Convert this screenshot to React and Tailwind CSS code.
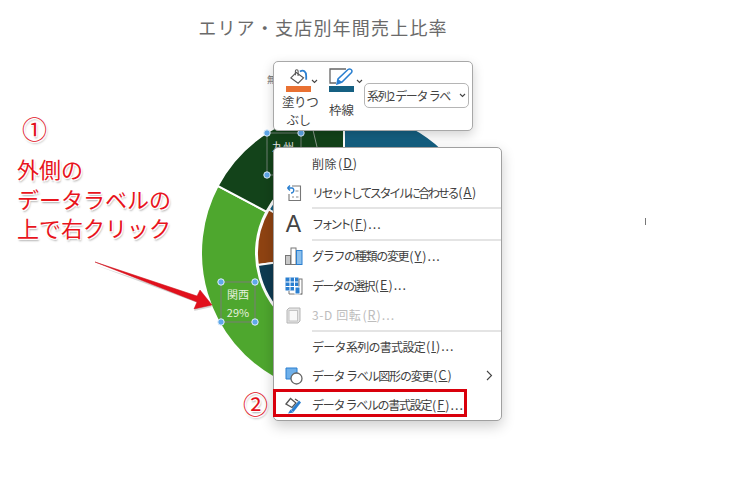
const font = { fontFamily: '"Noto Sans CJK JP", "Noto Sans", sans-serif' };

function polar(r, deg) {
  const a = (deg * Math.PI) / 180;
  return [344 + r * Math.sin(a), 253 - r * Math.cos(a)];
}

function slice(r0, r1, from, to) {
  const [x0, y0] = polar(r1, from);
  const [x1, y1] = polar(r1, to);
  const [x2, y2] = polar(r0, to);
  const [x3, y3] = polar(r0, from);
  const large = to - from > 180 ? 1 : 0;
  return `M${x0} ${y0}A${r1} ${r1} 0 ${large} 1 ${x1} ${y1}L${x2} ${y2}A${r0} ${r0} 0 ${large} 0 ${x3} ${y3}Z`;
}

function Handle({ x, y }) {
  return <circle cx={x} cy={y} r="3.2" fill="#5fa8ea" stroke="#e4f0fb" strokeWidth="1" />;
}

function Chart() {
  return (
    <svg className="absolute left-0 top-0" width="740" height="487" viewBox="0 0 740 487">
      <path d={slice(88, 143, 0, 120)} fill="#156082" stroke="#fff" strokeWidth="2" />
      <path d={slice(88, 143, 120, 298)} fill="#4ea72e" stroke="#fff" strokeWidth="2" />
      <path d={slice(88, 143, 298, 360)} fill="#13431a" stroke="#fff" strokeWidth="2" />
      <path d={slice(40, 87, 300, 360)} fill="#156082" stroke="#fff" strokeWidth="2" />
      <path d={slice(40, 87, 262, 300)} fill="#8f4312" stroke="#fff" strokeWidth="2" />
      <path d={slice(40, 87, 120, 262)} fill="#0e3b52" stroke="#fff" strokeWidth="2" />
      <path d="M313 130L317 147" stroke="#8a9a8c" strokeWidth="1" />

      <rect x="267" y="133" width="34" height="42" fill="none" stroke="#6f7f72" strokeWidth="1" />
      <Handle x={267} y={133} />
      <Handle x={301} y={133} />
      <Handle x={267} y={175} />

      <rect x="221" y="282" width="34" height="40" fill="none" stroke="#6c8a60" strokeWidth="1.5" />
      <Handle x={221} y={282} />
      <Handle x={255} y={282} />
      <Handle x={221} y={322} />
      <Handle x={255} y={322} />

      <path d="M95 263L197 297L201 291L212 305L194 309L197 303L198 301Z" fill="#b0b0b0" opacity="0.5" transform="translate(0 2)" />
      <path d="M95 262L197 296L200 290L212 305L194 309L197 302Z" fill="#e2101c" stroke="#c8101a" strokeWidth="0.5" />
    </svg>
  );
}

function FillIcon() {
  return (
    <svg width="20" height="17" viewBox="0 0 20 17">
      <path d="M1 10L7 4L15 10L9 16Z" fill="#fff" stroke="#555" strokeWidth="1.3" />
      <path d="M6 7V2.5C6 0.5 9 0.5 9 2.5V8" fill="none" stroke="#555" strokeWidth="1.2" />
      <path d="M11 3C15 0.5 18 3 18 8V12" fill="none" stroke="#2a7fd0" strokeWidth="2" />
    </svg>
  );
}

function LineIcon() {
  return (
    <svg width="25" height="17" viewBox="0 0 25 17">
      <path d="M7 15H1V1H17" fill="none" stroke="#666" strokeWidth="1.3" />
      <path d="M8 16L9 11L19 1.5C21 0 24 2 22.5 4.5L13 14Z" fill="#fff" stroke="#2a7fd0" strokeWidth="1.5" />
      <path d="M8 16L9 11L13 14Z" fill="#2a7fd0" />
    </svg>
  );
}

function Chevron() {
  return (
    <svg width="7" height="5" viewBox="0 0 7 5">
      <path d="M1 1L3.5 3.5L6 1" fill="none" stroke="#444" strokeWidth="1.1" />
    </svg>
  );
}

function Toolbar() {
  return (
    <div className="absolute left-[273px] top-[61px] flex h-[70px] w-[200px] rounded-[5px] border border-[#a8a8a8] bg-white text-[#444] shadow-[0_4px_12px_rgba(0,0,0,0.18)]">
      <div className="w-[44px] pl-[12px] pt-[6px]">
        <div className="flex h-[17px] items-end pl-[4px]">
          <FillIcon />
          <span className="mb-[1px] ml-[3px]">
            <Chevron />
          </span>
        </div>
        <div className="mt-[1px] h-[6px] w-[25px] bg-[#e97132]" />
        <div className="ml-[-4px] mt-[1px] w-[33px] whitespace-nowrap text-center text-[12.5px] leading-[18px] tracking-[-0.5px]">
          塗りつ
          <br />
          ぶし
        </div>
      </div>
      <div className="w-[46px] pl-[11px] pt-[6px]">
        <div className="flex h-[17px] items-end">
          <LineIcon />
          <span className="mb-[1px] ml-[2px]">
            <Chevron />
          </span>
        </div>
        <div className="mt-[1px] h-[6px] w-[25px] bg-[#156082]" />
        <div className="mt-[9px] w-[25px] text-center text-[12.5px] leading-[17px]">枠線</div>
      </div>
      <div className="mt-[21px] flex h-[25px] w-[105px] items-center justify-between rounded-[5px] border border-[#b5b5b5] pl-[2px] pr-[2px]">
        <span className="whitespace-nowrap text-[12px] tracking-[-1.3px]">系列2 データ ラベ</span>
        <Chevron />
      </div>
    </div>
  );
}

function ResetIcon() {
  return (
    <svg width="16" height="18" viewBox="0 0 16 18">
      <path d="M6 2H14.5V16.5H3V10" fill="#fff" stroke="#777" strokeWidth="1.1" />
      <path d="M9.5 7H12.5M6 13H8M10 13H12.5" stroke="#888" strokeWidth="1" />
      <path d="M1.5 4L4 1.5M1.5 4L4 6.5M1.5 4H6C8.5 4 8.5 9 5 9" fill="none" stroke="#2a7fd0" strokeWidth="1.4" />
    </svg>
  );
}

function ChartTypeIcon() {
  return (
    <svg width="18" height="18" viewBox="0 0 18 18">
      <rect x="0.5" y="8.5" width="5" height="9" fill="#c8c8c8" stroke="#777" />
      <rect x="6" y="1" width="5" height="16.5" fill="#fff" stroke="#777" />
      <rect x="11.5" y="3.5" width="5.5" height="14" fill="#8cc0ec" stroke="#2a7fd0" />
    </svg>
  );
}

function DataIcon() {
  return (
    <svg width="18" height="18" viewBox="0 0 18 18">
      <rect x="0.5" y="0.5" width="13" height="13" fill="#2a7fd0" />
      <path d="M0.5 5H13.5M0.5 9.5H13.5M5 0.5V13.5M9.5 0.5V13.5" stroke="#fff" strokeWidth="1" />
      <rect x="14" y="2" width="3" height="15" fill="#fff" stroke="#777" />
      <path d="M4 14V17H17" fill="none" stroke="#777" />
      <rect x="10" y="10" width="5" height="7" fill="#2a7fd0" stroke="#fff" />
    </svg>
  );
}

function RotateIcon() {
  return (
    <svg width="15" height="17" viewBox="0 0 15 17">
      <path d="M1 3L3 1H14V14L12 16H1Z" fill="#e4e4e4" stroke="#b5b5b5" />
      <rect x="3" y="3.5" width="8.5" height="10.5" fill="#f8f8f8" stroke="#c4c4c4" />
    </svg>
  );
}

function ShapeIcon() {
  return (
    <svg width="18" height="18" viewBox="0 0 18 18">
      <path d="M1 12V1H12V6A6 6 0 0 0 6 12Z" fill="#6fb0ea" stroke="#2a7fd0" />
      <circle cx="11.5" cy="11.5" r="5.5" fill="#fff" stroke="#666" strokeWidth="1.3" />
    </svg>
  );
}

function FormatIcon() {
  return (
    <svg width="17" height="17" viewBox="0 0 17 17">
      <path d="M1 7L5.5 1.5L11 6L7 10.5Z" fill="#fff" stroke="#555" strokeWidth="1.3" />
      <path d="M6 13L14 3.5L16 5.5L8.5 15Z" fill="#2a7fd0" />
      <path d="M3 16.5L5.5 12.5L8.5 15.5Z" fill="#2a7fd0" />
      <path d="M10 2L13 4" stroke="#555" strokeWidth="1.3" />
    </svg>
  );
}

function MenuRow({ icon, label, k, tail = ")", height, track, dim, arrow }) {
  return (
    <div className={`relative flex items-center ${height}`}>
      <div className="flex w-[38px] shrink-0 justify-center pl-[1px]">{icon}</div>
      <span className={`flex items-center whitespace-nowrap ${dim ? "text-[#bdbdbd]" : "text-[#3f3f3f]"}`}>
        <span className={`text-[12px] ${track}`}>{label}</span>
        <span className="ml-[1px] text-[12.5px] tracking-[1px]">
          (<span className="underline">{k}</span>
          {tail}
        </span>
      </span>
      {arrow ? (
        <svg className="absolute right-[8px] top-[9px]" width="7" height="11" viewBox="0 0 7 11">
          <path d="M1 1L5.5 5.5L1 10" fill="none" stroke="#444" strokeWidth="1.1" />
        </svg>
      ) : null}
    </div>
  );
}

function Sep() {
  return <div className="ml-[38px] h-[2px] bg-[#e4e4e4]" />;
}

function Menu() {
  return (
    <div className="absolute left-[273px] top-[147px] flex h-[274px] w-[229px] flex-col rounded-[5px] border border-[#a0a0a0] bg-white pt-[1px] shadow-[0_5px_14px_rgba(0,0,0,0.2)]">
      <MenuRow label="削除" k="D" height="h-[29px]" track="tracking-[0.5px]" />
      <MenuRow icon={<ResetIcon />} label="リセットしてスタイルに合わせる" k="A" height="h-[29px]" track="tracking-[-2.3px]" />
      <Sep />
      <MenuRow
        icon={<span className="text-[23px] leading-none text-[#444]" style={{ fontFamily: '"Liberation Sans"' }}>A</span>}
        label="フォント"
        k="F"
        tail=")..."
        height="h-[30px]"
        track="tracking-[-2.8px]"
      />
      <Sep />
      <MenuRow icon={<ChartTypeIcon />} label="グラフの種類の変更" k="Y" tail=")..." height="h-[30px]" track="tracking-[-1.3px]" />
      <MenuRow icon={<DataIcon />} label="データの選択" k="E" tail=")..." height="h-[29px]" track="tracking-[-1.7px]" />
      <MenuRow icon={<RotateIcon />} label="3-D 回転" k="R" tail=")..." height="h-[30px]" track="tracking-[0.6px]" dim />
      <Sep />
      <MenuRow label="データ系列の書式設定" k="I" tail=")..." height="h-[29px]" track="tracking-[-0.7px]" />
      <MenuRow icon={<ShapeIcon />} label="データ ラベル図形の変更" k="C" height="h-[29px]" track="tracking-[-1.2px]" arrow />
      <MenuRow icon={<FormatIcon />} label="データ ラベルの書式設定" k="F" tail=")..." height="h-[30px]" track="tracking-[-1.3px]" />
      <div className="absolute left-[-1px] top-[241px] h-[28px] w-[194px] border-[3px] border-[#d9000c]" />
    </div>
  );
}

const outline =
  "[text-shadow:1px_1px_0_#fff,-1px_-1px_0_#fff,1px_-1px_0_#fff,-1px_1px_0_#fff,1px_2px_2px_rgba(0,0,0,0.35)]";

export default function App() {
  return (
    <div className="relative h-[487px] w-[740px] overflow-hidden bg-white" style={font}>
      <div className="flex w-[646px] justify-center pt-[13px] text-[18px] leading-[28px] tracking-[1.2px] text-[#6a6a6a]">
        エリア・支店別年間売上比率
      </div>

      <Chart />

      <div className="absolute left-[267px] top-[74px] text-[9px] leading-[12px] text-[#777]">無</div>
      <div className="absolute left-[272px] top-[139px] text-[11px] leading-[14px] text-[#e8e8e8]">九州</div>
      <div className="absolute left-[645px] top-[218px] h-[7px] w-[1px] bg-[#777]" />
      <div className="absolute left-[221px] top-[285px] flex h-[36px] w-[34px] flex-col items-center text-[11px] leading-[18px] text-[#e6f0df]">
        <span>関西</span>
        <span>29%</span>
      </div>

      <div className={`absolute left-[22px] top-[112px] text-[25px] leading-[32px] text-[#e2101c] ${outline}`}>①</div>
      <div className={`absolute left-[17px] top-[154px] text-[22px] leading-[29.5px] text-[#e8141c] ${outline}`}>
        外側の
        <br />
        データラベルの
        <br />
        上で右クリック
      </div>
      <div className={`absolute left-[243px] top-[387px] text-[25px] leading-[32px] text-[#e2101c] ${outline}`}>②</div>

      <Toolbar />
      <Menu />
    </div>
  );
}
